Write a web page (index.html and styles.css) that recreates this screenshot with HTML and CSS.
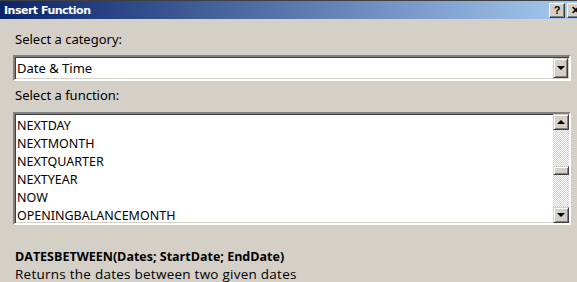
FILE: index.html
```html
<!DOCTYPE html>
<html>
<head>
<meta charset="utf-8">
<title>Insert Function</title>
<link rel="stylesheet" href="styles.css">
</head>
<body>
<div class="window">
  <div class="titlebar">
    <span class="title">Insert Function</span>
    <span class="tbtns">
      <span class="tbtn">?</span>
      <span class="tbtn">&#x2715;</span>
    </span>
  </div>
  <div class="content">
    <div class="label">Select a category:</div>
    <div class="combo">
      <span class="combo-text">Date &amp; Time</span>
      <span class="sbtn"><span class="arr-down"></span></span>
    </div>
    <div class="label">Select a function:</div>
    <div class="listbox">
      <ul class="items">
        <li>NEXTDAY</li>
        <li>NEXTMONTH</li>
        <li>NEXTQUARTER</li>
        <li>NEXTYEAR</li>
        <li>NOW</li>
        <li>OPENINGBALANCEMONTH</li>
      </ul>
      <div class="scrollbar">
        <span class="sbtn"><span class="arr-up"></span></span>
        <div class="track">
          <span class="thumb"></span>
        </div>
        <span class="sbtn"><span class="arr-down"></span></span>
      </div>
    </div>
    <div class="syntax">DATESBETWEEN(Dates; StartDate; EndDate)</div>
    <div class="desc">Returns the dates between two given dates</div>
  </div>
</div>
</body>
</html>
```

FILE: styles.css
```css
body{margin:0; background:#d4d0c8; font-family:"Noto Sans", "DejaVu Sans", sans-serif; overflow:hidden;}

.window{width:577px; height:282px; background:#d4d0c8; border-top:1px solid #404040;}

.titlebar{height:18px; display:flex; align-items:center; justify-content:space-between; background:linear-gradient(to right, #0a246a, #a6caf0);}
.title{color:#fff; font-family:"DejaVu Sans", sans-serif; font-weight:bold; font-size:11px; padding-left:4px; letter-spacing:-0.5px;}
.tbtns{display:flex; gap:2px; padding-top:1px; margin-right:-6px;}
.tbtn{width:14px; height:13px; background:#d4d0c8; border:1px solid; border-color:#fff #404040 #404040 #fff; box-shadow:inset -1px -1px 0 #808080; font-family:"Liberation Sans", sans-serif; font-weight:bold; font-size:11px; line-height:13px; text-align:center; color:#000;}

.content{padding:9px 6px 0 13px;}
.label{font-size:13px; color:#000; padding-left:2px; height:22px; line-height:22px;}

.combo{height:22px; display:flex; align-items:center; justify-content:space-between; background:#fff; border:2px solid; border-color:#808080 #fff #fff #808080; box-shadow:inset 1px 1px 0 #404040, inset -1px -1px 0 #d4d0c8; margin:5px 0 3px;}
.combo-text{font-size:13px; padding-left:2px;}
.combo .sbtn{width:13px; height:18px; margin-right:1px;}

.sbtn{width:14px; height:14px; display:flex; align-items:center; justify-content:center; background:#d4d0c8; border:1px solid; border-color:#d4d0c8 #404040 #404040 #d4d0c8; box-shadow:inset 1px 1px 0 #fff, inset -1px -1px 0 #808080;}
.arr-down{width:0; height:0; border-left:4px solid transparent; border-right:4px solid transparent; border-top:4px solid #000;}
.arr-up{width:0; height:0; border-left:4px solid transparent; border-right:4px solid transparent; border-bottom:4px solid #000;}

.listbox{height:109px; display:flex; background:#fff; border:2px solid; border-color:#808080 #fff #fff #808080; box-shadow:inset 1px 1px 0 #404040, inset -1px -1px 0 #d4d0c8; margin-top:6px;}
.items{flex:1; list-style:none; margin:0; padding:3px 0 0 2px; font-size:12.5px; line-height:18px;}
.scrollbar{width:16px; display:flex; flex-direction:column;}
.track{flex:1; background-color:#eeece8; background-image:repeating-conic-gradient(#fff 0 25%, #d4d0c8 0 50%); background-size:2px 2px; display:flex; flex-direction:column; padding-top:36px;}
.thumb{height:7px; background:#d4d0c8; border:1px solid; border-color:#d4d0c8 #404040 #404040 #d4d0c8; box-shadow:inset 1px 1px 0 #fff, inset -1px -1px 0 #808080;}

.syntax{font-family:"Open Sans", sans-serif; font-weight:bold; font-size:12.5px; padding:24px 0 0 2px; line-height:16px;}
.desc{font-family:"Open Sans", sans-serif; font-size:13.5px; padding:1px 0 0 2px; line-height:16px; letter-spacing:0.25px;}
```
